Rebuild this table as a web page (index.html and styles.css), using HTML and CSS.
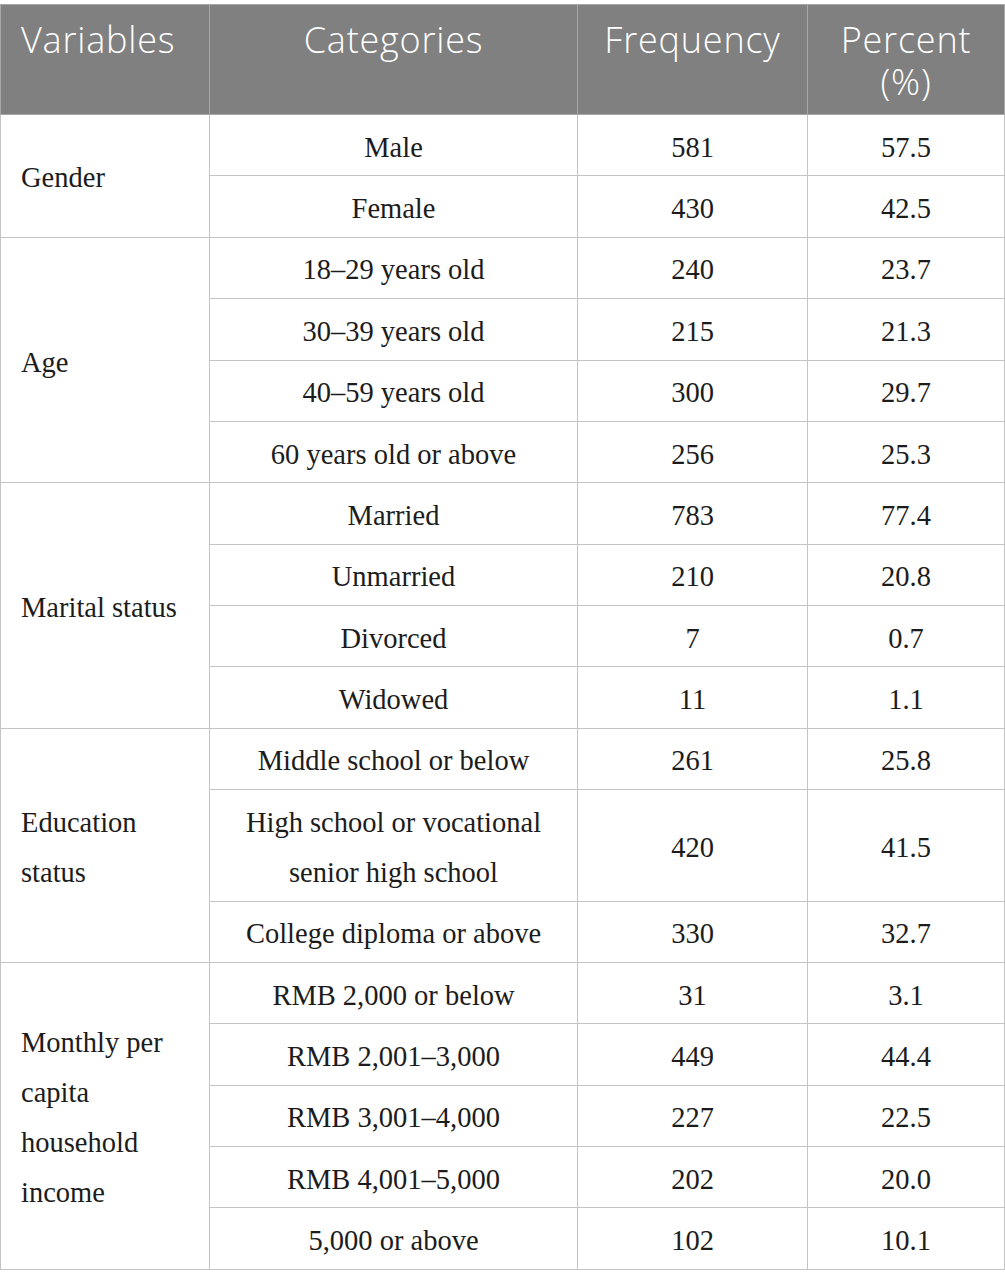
FILE: index.html
```html
<!DOCTYPE html>
<html lang="en">
<head>
  <meta charset="UTF-8">
  <title>Sample characteristics</title>
  <link rel="stylesheet" href="styles.css">
</head>
<body>
  <table class="stats">
    <thead>
      <tr>
        <th class="col-var">Variables</th>
        <th class="col-cat">Categories</th>
        <th class="col-freq">Frequency</th>
        <th class="col-pct">Percent (%)</th>
      </tr>
    </thead>
    <tbody>
      <!-- Gender -->
      <tr><td class="var" rowspan="2">Gender</td><td>Male</td><td>581</td><td>57.5</td></tr>
      <tr><td>Female</td><td>430</td><td>42.5</td></tr>

      <!-- Age -->
      <tr><td class="var" rowspan="4">Age</td><td>18–29 years old</td><td>240</td><td>23.7</td></tr>
      <tr><td>30–39 years old</td><td>215</td><td>21.3</td></tr>
      <tr><td>40–59 years old</td><td>300</td><td>29.7</td></tr>
      <tr><td>60 years old or above</td><td>256</td><td>25.3</td></tr>

      <!-- Marital status -->
      <tr><td class="var" rowspan="4">Marital status</td><td>Married</td><td>783</td><td>77.4</td></tr>
      <tr><td>Unmarried</td><td>210</td><td>20.8</td></tr>
      <tr><td>Divorced</td><td>7</td><td>0.7</td></tr>
      <tr><td>Widowed</td><td>11</td><td>1.1</td></tr>

      <!-- Education -->
      <tr><td class="var" rowspan="3">Education<br>status</td><td>Middle school or below</td><td>261</td><td>25.8</td></tr>
      <tr><td>High school or vocational<br>senior high school</td><td>420</td><td>41.5</td></tr>
      <tr><td>College diploma or above</td><td>330</td><td>32.7</td></tr>

      <!-- Income -->
      <tr><td class="var" rowspan="5">Monthly per<br>capita<br>household<br>income</td><td>RMB 2,000 or below</td><td>31</td><td>3.1</td></tr>
      <tr><td>RMB 2,001–3,000</td><td>449</td><td>44.4</td></tr>
      <tr><td>RMB 3,001–4,000</td><td>227</td><td>22.5</td></tr>
      <tr><td>RMB 4,001–5,000</td><td>202</td><td>20.0</td></tr>
      <tr><td>5,000 or above</td><td>102</td><td>10.1</td></tr>
    </tbody>
  </table>
</body>
</html>
```
FILE: styles.css
```css
/* Page */
body {
  margin: 0;
  padding-top: 4px;
  background: #fff;
}

/* Table */
.stats {
  width: 1005px;
  border-collapse: collapse;
  table-layout: fixed;
  font-family: "Liberation Serif", "DejaVu Serif", serif;
  color: #1c1c1c;
}

.stats th,
.stats td {
  border: 1px solid #c4c4c4;
}

.col-var { width: 209px; }
.col-cat { width: 368px; }
.col-freq { width: 230px; }

/* Header */
.stats thead th {
  background: #808080;
  color: #fff;
  font-family: "Open Sans", "Noto Sans", sans-serif;
  font-weight: 300;
  font-size: 36px;
  letter-spacing: 0.8px;
  line-height: 42px;
  height: 110px;
  vertical-align: top;
  padding: 14px 20px 0;
  text-align: center;
  border-color: #a8a8a8;
  box-sizing: border-box;
}

.stats thead th.col-var {
  text-align: left;
}

/* Body */
.stats td {
  font-size: 28.5px;
  line-height: 50px;
  padding: 7.7px 20px 2.7px;
  text-align: center;
  vertical-align: middle;
}

.stats td.var {
  text-align: left;
}
```
